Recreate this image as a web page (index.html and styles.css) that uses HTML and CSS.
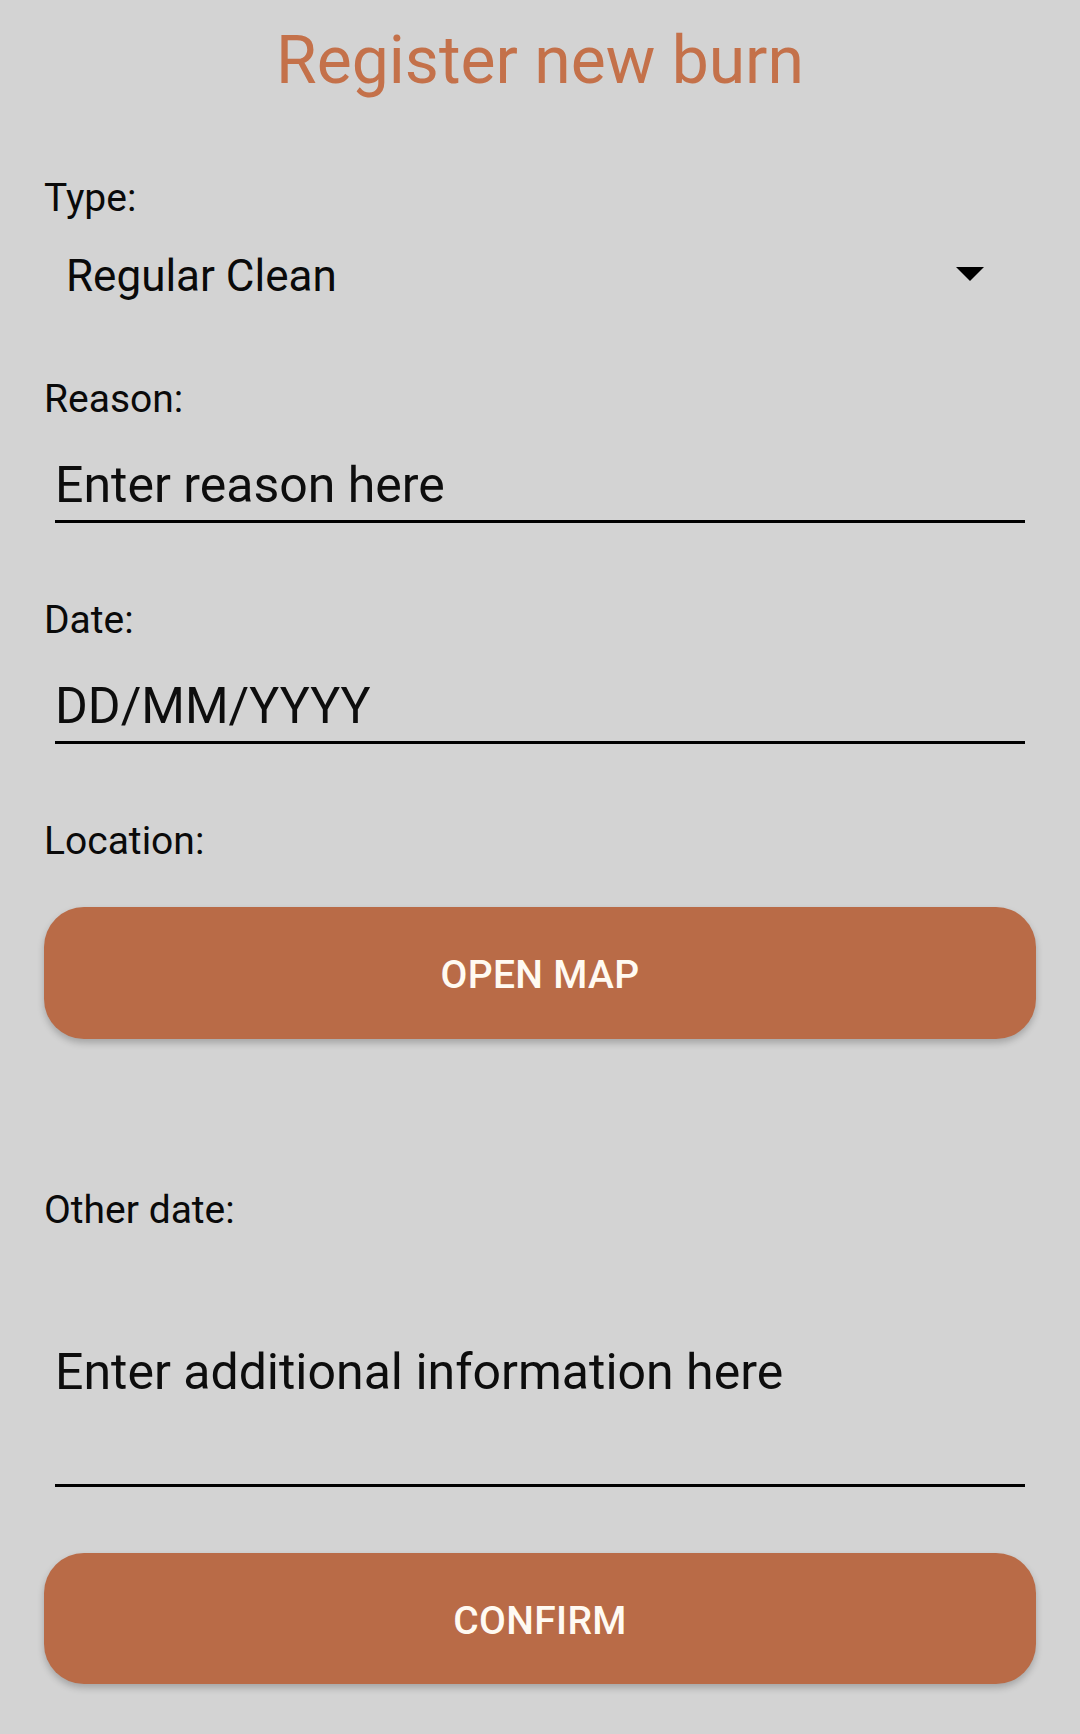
FILE: index.html
```html
<!DOCTYPE html>
<html lang="en">
<head>
<meta charset="utf-8">
<title>Register new burn</title>
<link rel="stylesheet" href="styles.css">
</head>
<body>
<main class="form">
  <h1 class="title">Register new burn</h1>

  <div class="label label-type">Type:</div>
  <div class="select">
    <span class="select-value">Regular Clean</span>
    <svg class="select-arrow" width="28" height="14" viewBox="0 0 28 14" aria-hidden="true"><polygon points="0,0 28,0 14,14" fill="#000"/></svg>
  </div>

  <div class="label label-gap">Reason:</div>
  <div class="input">Enter reason here</div>

  <div class="label label-gap">Date:</div>
  <div class="input">DD/MM/YYYY</div>

  <div class="label label-gap">Location:</div>
  <button class="btn btn-map" type="button">OPEN MAP</button>

  <div class="label label-other">Other date:</div>
  <div class="input input-multi">Enter additional information here</div>

  <button class="btn btn-confirm" type="button">CONFIRM</button>
</main>
</body>
</html>
```

FILE: styles.css
```css
html, body {
  margin: 0;
  padding: 0;
  background: #d3d3d3;
}

body {
  font-family: Roboto, "Noto Sans", "Liberation Sans", sans-serif;
  color: #000;
}

.form {
  display: flex;
  flex-direction: column;
  padding: 22px 44px 0 44px;
  height: 1734px;
  box-sizing: border-box;
}

.title {
  margin: 0;
  font-size: 66px;
  line-height: 77px;
  font-weight: 400;
  text-align: center;
  color: #c4714a;
}

.label {
  font-size: 39px;
  line-height: 46px;
  color: #0a0a0a;
}

.label-type {
  margin-top: 76px;
}

.label-gap {
  margin-top: 74px;
}

.label-other {
  margin-top: 148px;
}

.select {
  margin-top: 29px;
  display: flex;
  align-items: center;
  justify-content: space-between;
  padding: 0 52px 0 22px;
  font-size: 44px;
  line-height: 52px;
  color: #0a0a0a;
}

.select-arrow {
  display: block;
  margin-top: -4px;
}

.input {
  margin: 34px 11px 0 11px;
  font-size: 50px;
  line-height: 59px;
  color: #0d0d0d;
  padding-bottom: 5px;
  border-bottom: 3px solid #000;
}

.input-multi {
  margin-top: 110px;
  padding-bottom: 82px;
}

.btn {
  display: flex;
  align-items: center;
  justify-content: center;
  width: 100%;
  height: 132px;
  border: none;
  border-radius: 40px;
  background: #b96b47;
  color: #fffaf2;
  font-family: Roboto, "Noto Sans", "Liberation Sans", sans-serif;
  font-weight: 500;
  font-size: 39px;
  letter-spacing: 0.3px;
  box-shadow: 0 4px 7px rgba(0, 0, 0, 0.22);
  padding: 0;
  padding-top: 4px;
}

.btn-map {
  margin-top: 43px;
}

.btn-confirm {
  margin-top: 66px;
  height: 131px;
}
```
